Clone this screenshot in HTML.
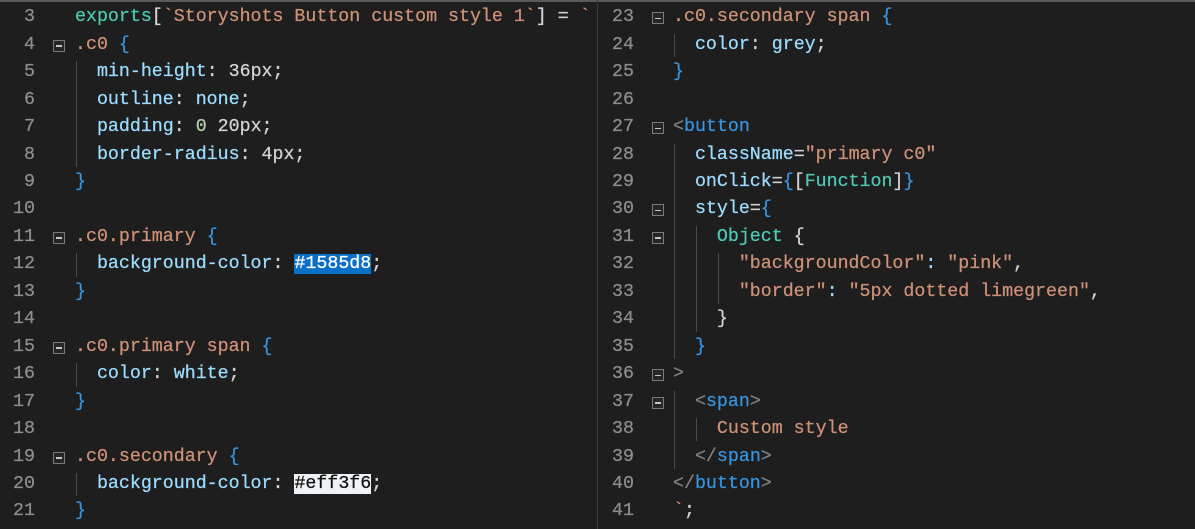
<!DOCTYPE html>
<html><head><meta charset="utf-8"><style>
html,body{margin:0;padding:0;background:#1e1e1e;width:1195px;height:529px;overflow:hidden}
body{position:relative;font-family:"Liberation Mono","DejaVu Sans Mono",monospace;font-size:18.3px;color:#d4d4d4;-webkit-text-stroke:0.25px}
.top{position:absolute;left:0;top:0;width:1195px;height:2px;background:#5a5a5a}
.div{position:absolute;left:597px;top:0;width:1px;height:529px;background:#3c3c3c}
.ln{position:absolute;height:27.45px;line-height:27.45px;white-space:pre}
.num{position:absolute;text-align:right;color:#8e8e8e;width:40px}
.fold{position:absolute;width:10px;height:10px;border:1px solid #7a7a7a;top:8px;background:#262626}
.fold:after{content:"";position:absolute;left:2px;top:4.5px;width:6px;height:1.5px;background:#c5c5c5}
.code{position:absolute}
.g{position:absolute;width:1px;background:#4a4a4a}
.s{color:#ce9178}.p{color:#9cdcfe}.b{color:#3794e0}.t{color:#4ec9b0}.n{color:#b5cea8}.w{color:#d4d4d4}.gr{color:#808080}
.hl{background:#0a6fc6;color:#fff}.hw{background:#eff3f6;color:#111}
</style></head><body>
<div class="top"></div><div class="div"></div>
<div id="L"></div><div id="R"></div>
<script>
const LH=27.45,T0=4.3;
function pane(lines,start,numX,foldX,codeX,guides){
 let h='';
 lines.forEach((l,i)=>{
  const y=T0+i*LH;
  h+=`<div class="ln" style="top:${y}px;left:0;width:598px"><span class="num" style="left:${numX-40}px">${start+i}</span>`;
  if(l[0])h+=`<span class="fold" style="left:${foldX}px"></span>`;
  h+=`<span class="code" style="left:${codeX}px">${l[1]}</span></div>`;
 });
 guides.forEach(g=>{h+=`<div class="g" style="left:${g[0]}px;top:${T0+(g[1]-start)*LH+2}px;height:${(g[2]-g[1]+1)*LH-4}px"></div>`});
 return h;
}
const left=[
[0,'<span class="t">exports</span>[<span class="s">`Storyshots Button custom style 1`</span>] = <span class="s">`</span>'],
[1,'<span class="s">.c0</span> <span class="b">{</span>'],
[0,'  <span class="p">min-height</span>: <span class="w">36px</span>;'],
[0,'  <span class="p">outline</span>: <span class="p">none</span>;'],
[0,'  <span class="p">padding</span>: <span class="n">0</span> 20px;'],
[0,'  <span class="p">border-radius</span>: 4px;'],
[0,'<span class="b">}</span>'],
[0,''],
[1,'<span class="s">.c0.primary</span> <span class="b">{</span>'],
[0,'  <span class="p">background-color</span>: <span class="hl">#1585d8</span>;'],
[0,'<span class="b">}</span>'],
[0,''],
[1,'<span class="s">.c0.primary span</span> <span class="b">{</span>'],
[0,'  <span class="p">color</span>: <span class="p">white</span>;'],
[0,'<span class="b">}</span>'],
[0,''],
[1,'<span class="s">.c0.secondary</span> <span class="b">{</span>'],
[0,'  <span class="p">background-color</span>: <span class="hw">#eff3f6</span>;'],
[0,'<span class="b">}</span>']];
const right=[
[1,'<span class="s">.c0.secondary span</span> <span class="b">{</span>'],
[0,'  <span class="p">color</span>: <span class="p">grey</span>;'],
[0,'<span class="b">}</span>'],
[0,''],
[1,'<span class="gr">&lt;</span><span class="b">button</span>'],
[0,'  <span class="p">className</span>=<span class="s">"primary c0"</span>'],
[0,'  <span class="p">onClick</span>=<span class="b">{</span>[<span class="t">Function</span>]<span class="b">}</span>'],
[1,'  <span class="p">style</span>=<span class="b">{</span>'],
[1,'    <span class="t">Object</span> {'],
[0,'      <span class="s">"backgroundColor"</span><span class="p">:</span> <span class="s">"pink"</span>,'],
[0,'      <span class="s">"border"</span><span class="p">:</span> <span class="s">"5px dotted limegreen"</span>,'],
[0,'    }'],
[0,'  <span class="b">}</span>'],
[1,'<span class="gr">&gt;</span>'],
[1,'  <span class="gr">&lt;</span><span class="b">span</span><span class="gr">&gt;</span>'],
[0,'    <span class="s">Custom style</span>'],
[0,'  <span class="gr">&lt;/</span><span class="b">span</span><span class="gr">&gt;</span>'],
[0,'<span class="gr">&lt;/</span><span class="b">button</span><span class="gr">&gt;</span>'],
[0,'<span class="s">`</span>;']];
document.getElementById('L').innerHTML=pane(left,3,35,53,75,[[76,5,8],[76,12,12],[76,16,16],[76,20,20]]);
document.getElementById('R').innerHTML='<div style="position:absolute;left:598px;top:0">'+pane(right,23,36,54,75,[[76,24,24],[76,28,35],[98,31,34],[120,32,33],[76,37,39],[98,38,38]])+'</div>';
</script>
</body></html>
